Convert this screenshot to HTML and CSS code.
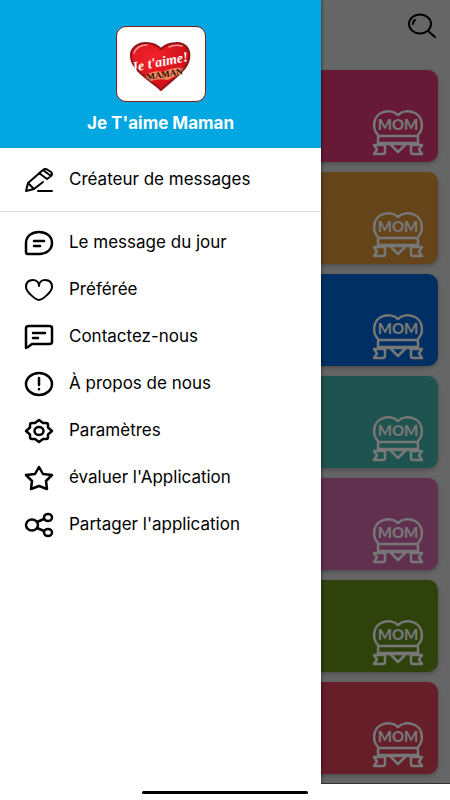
FILE: index.html
```html
<!DOCTYPE html>
<html lang="fr">
<head>
    <meta charset="UTF-8">
    <meta name="viewport" content="width=device-width, initial-scale=1">
    <title>Je T'aime Maman</title>
    <link rel="stylesheet" href="styles.css">
</head>
<body>

<div class="app">
    <main class="page">
        <header class="toolbar">
            <button class="search" aria-label="Rechercher">
                <svg width="28" height="26" viewBox="0 0 28 26">
                    <ellipse cx="12" cy="11" rx="11" ry="9.5"/>
                    <path d="M20 18L27 24M5 11Q5 8 7 7"/>
                </svg>
            </button>
        </header>
        <div class="cards">
            <a href="#" class="card rose" aria-label="Mom">
                <svg viewBox="0 0 50 46">
                    <g id="mom">
                        <path d="M5 25C-1 19 0 7 8 3C14 0 21 1 25 5C29 1 36 0 42 3C50 7 51 19 45 25"/>
                        <path d="M5 34V28Q5 26 7 26H43Q45 26 45 28V34M5 33H45M12 35H1L4 39.500L1 44H10Q12 44 12 42V34H38V42Q38 44 40 44H49L46 39.500L49 35H38M18 35L25 42L32 35"/>
                        <text x="25" y="20" text-anchor="middle">MOM</text>
                    </g>
                </svg>
            </a>
            <a href="#" class="card orange" aria-label="Mom"><svg viewBox="0 0 50 46"><use href="#mom"/></svg></a>
            <a href="#" class="card blue" aria-label="Mom"><svg viewBox="0 0 50 46"><use href="#mom"/></svg></a>
            <a href="#" class="card teal" aria-label="Mom"><svg viewBox="0 0 50 46"><use href="#mom"/></svg></a>
            <a href="#" class="card pink" aria-label="Mom"><svg viewBox="0 0 50 46"><use href="#mom"/></svg></a>
            <a href="#" class="card green" aria-label="Mom"><svg viewBox="0 0 50 46"><use href="#mom"/></svg></a>
            <a href="#" class="card red" aria-label="Mom"><svg viewBox="0 0 50 46"><use href="#mom"/></svg></a>
        </div>
    </main>

    <aside class="drawer">
        <div class="head">
            <div class="logo">
                <svg width="72" height="54" viewBox="-4 -3 72 54">
                    <defs>
                        <radialGradient id="heart" cx="35%" cy="30%" r="75%">
                            <stop offset="0" stop-color="#f5222a"/>
                            <stop offset="1" stop-color="#c80d16"/>
                        </radialGradient>
                    </defs>
                    <path fill="url(#heart)" stroke="#8f1519" d="M32 50C24 42 3 31 2 17C1 7 10 3 17 3C24 3 29 6 32 9C36 5 41 3 48 3C56 3 62 9 60 19C58 31 40 42 32 50Z"/>
                    <path fill="none" stroke="#f79a94" stroke-width="1.5" d="M5 13Q8 5 18 5M40 7Q46 4 53 6"/>
                    <path fill="#f4885c" stroke="none" d="M18 34Q26 30 34 32Q44 27 54 28L52 34Q44 37 39 40Q30 38 22 41Q15 39 18 34Z"/>
                    <text class="script" x="3" y="32" transform="rotate(-11 3 32)">Je t'aime!</text>
                    <text class="name" x="18" y="40" transform="rotate(-9 18 40)">MAMAN</text>
                </svg>
            </div>
            <h1>Je T'aime Maman</h1>
        </div>
        <nav>
            <div class="group">
                <a href="#" class="item">
                    <svg class="icon" viewBox="0 0 28 24">
                        <path d="M1 23L3 15L18 2Q20 0 23 2L26 4Q28 6 26 8L22 11L14 5M3 15L9 21L1 23M9 21L18 14M18 2L26 8M13 23H27"/>
                    </svg>
                    <span>Créateur de messages</span>
                </a>
            </div>
            <div class="group">
                <a href="#" class="item">
                    <svg class="icon bold" viewBox="0 0 28 24">
                        <path d="M1 21V12C1 5 7 1 14 1S27 5 27 12S21 23 14 23H3Q1 23 1 21ZM9 10H19M9 15H15"/>
                    </svg>
                    <span>Le message du jour</span>
                </a>
                <a href="#" class="item">
                    <svg class="icon" viewBox="0 0 28 24">
                        <path d="M14 22C11 22 1 14 1 9C1 4 4 2 8 2C11 2 14 4 14 8C14 4 17 2 20 2C24 2 27 4 27 9C27 14 17 22 14 22Z"/>
                    </svg>
                    <span>Préférée</span>
                </a>
                <a href="#" class="item">
                    <svg class="icon bold" viewBox="0 0 28 24">
                        <path d="M1 23V3Q1 1 4 1H24Q27 1 27 3V17Q27 19 24 19H7L3 22L1 23ZM8 8H20M8 13H13"/>
                    </svg>
                    <span>Contactez-nous</span>
                </a>
                <a href="#" class="item">
                    <svg class="icon bold" viewBox="0 0 28 24">
                        <ellipse cx="14" cy="12" rx="13" ry="11"/>
                        <path d="M14 6V13M14 17V17.3"/>
                    </svg>
                    <span>À propos de nous</span>
                </a>
                <a href="#" class="item">
                    <svg class="icon bold" viewBox="0 0 28 24">
                        <path d="M14 1L18 4H21Q23 4 23 6V8.500L27 12L23 15.500V18Q23 20 21 20H18L14 23L10 20H7Q5 20 5 18V15.500L1 12L5 8.500V6Q5 4 7 4H10Z"/>
                        <ellipse cx="14" cy="12" rx="4.5" ry="4"/>
                    </svg>
                    <span>Paramètres</span>
                </a>
                <a href="#" class="item">
                    <svg class="icon bold" viewBox="0 0 28 24">
                        <path d="M14 1L18 8L27 9L21 15L22 23L14 20L6 23L7 15L1 9L10 8Z"/>
                    </svg>
                    <span>évaluer l'Application</span>
                </a>
                <a href="#" class="item">
                    <svg class="icon bold" viewBox="0 0 28 24">
                        <ellipse cx="7" cy="12" rx="6" ry="5.5"/>
                        <ellipse cx="23" cy="4.5" rx="4" ry="3.5"/>
                        <ellipse cx="23" cy="19.5" rx="4" ry="3.5"/>
                        <path d="M12 9L19 6M12 15L19 18"/>
                    </svg>
                    <span>Partager l'application</span>
                </a>
            </div>
        </nav>
    </aside>
</div>
<div class="navbar"><span class="pill"></span></div>

</body>
</html>
```

FILE: styles.css
```css
*{box-sizing:border-box;padding:0;margin:0;}
body{display:flex;flex-direction:column;min-height:100vh;background:#fff;color:#000;font-family:Inter,"Liberation Sans",sans-serif;}
a{color:inherit;text-decoration:none;}
svg{display:block;fill:none;stroke:currentColor;stroke-width:2;stroke-linecap:round;stroke-linejoin:round;overflow:visible;}

.app{position:relative;flex:1;overflow:hidden;}
.page{height:100%;padding:0 12px 9px;background:#666;border-bottom:1px solid #333;}
.toolbar{display:flex;justify-content:flex-end;height:70px;padding-top:12px;}
.search{width:30px;height:28px;border:0;background:none;}
.cards{display:flex;flex-direction:column;gap:10px;}
.card{display:flex;justify-content:flex-end;align-items:flex-end;height:92px;padding:0 15px 6px;border-radius:10px;color:#777;box-shadow:0 2px 4px rgba(0,0,0,.25);}
.card svg{width:50px;height:46px;stroke-width:2.5;}
#mom text{fill:currentColor;stroke:none;font:900 15px Lato,sans-serif;}
.rose{background:#661a36;}
.orange{background:#664419;}
.blue{background:#003063;}
.teal{background:#1e534f;}
.pink{background:#62304f;}
.green{background:#30420c;}
.red{background:#661e29;}

.drawer{position:absolute;top:0;left:0;bottom:0;width:calc(100% - 129px);background:#fff;box-shadow:1px 0 3px rgba(0,0,0,.4);}
.head{display:flex;flex-direction:column;align-items:center;height:148px;padding-top:26px;background:#00a7e1;color:#fff;}
.logo{display:flex;justify-content:center;align-items:center;width:90px;height:76px;border:1px solid #7d1a1a;border-radius:10px;background:#fff;}
.script{fill:#fff;stroke:none;font:italic bold 14px "Liberation Serif",serif;}
.name{fill:#2b0d08;stroke:none;font:bold 9px "Liberation Serif",serif;}
h1{margin-top:10px;font-size:17px;line-height:22px;font-weight:700;}
.group{padding:8px 0;}
.group + .group{padding-top:7px;border-top:1px solid #ddd;}
.item{display:flex;align-items:center;gap:16px;height:47px;padding:0 25px;font-size:17px;line-height:20px;white-space:nowrap;}
.item span{padding-bottom:2px;}
.icon{width:28px;height:24px;}
.bold{stroke-width:2.5;}

.navbar{display:flex;justify-content:center;height:16px;padding-top:7px;background:#fff;}
.pill{width:166px;height:3px;border-radius:2px;background:#000;}
```
